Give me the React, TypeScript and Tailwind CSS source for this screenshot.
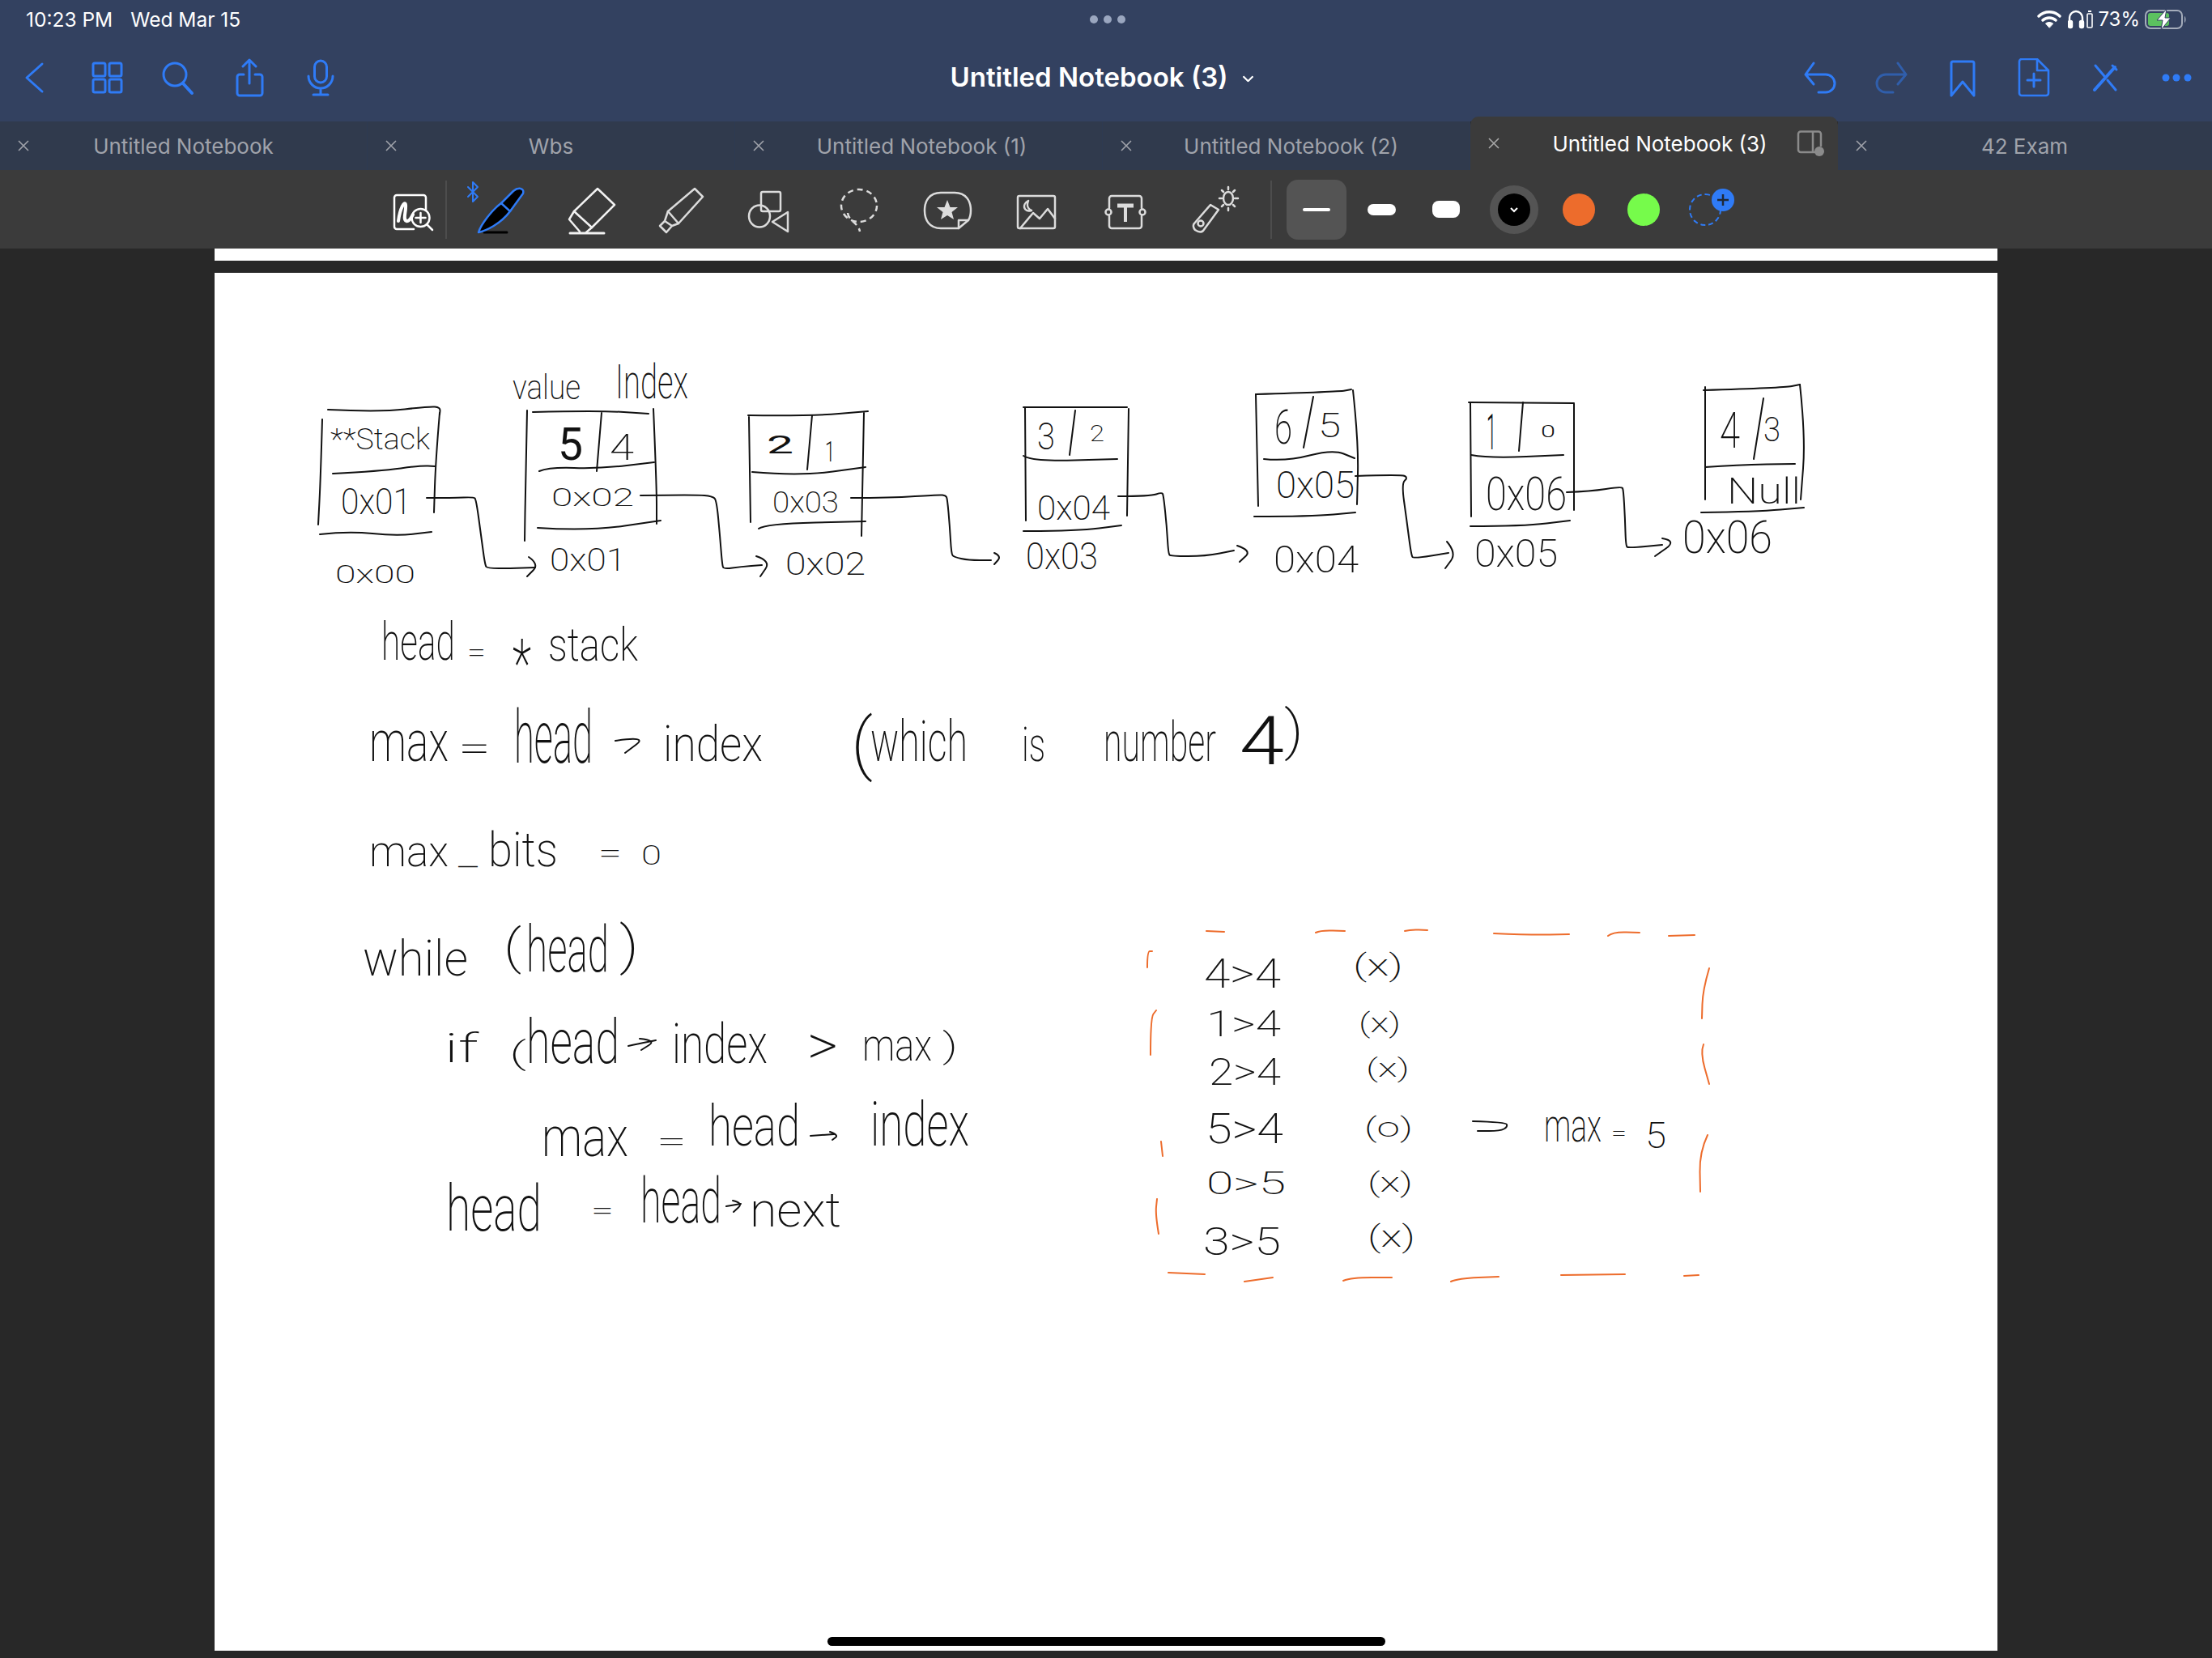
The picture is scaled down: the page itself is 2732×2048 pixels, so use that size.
import { ReactNode } from 'react';

type Pt = [number, number];

// quadratic smoothing through midpoints, gives the strokes a hand drawn feel
const smooth = (pts: Pt[]) => {
  let d = `M${pts[0][0]} ${pts[0][1]}`;
  for (let i = 1; i < pts.length - 1; i++) {
    const mx = (pts[i][0] + pts[i + 1][0]) / 2;
    const my = (pts[i][1] + pts[i + 1][1]) / 2;
    d += ` Q${pts[i][0]} ${pts[i][1]} ${mx} ${my}`;
  }
  const last = pts[pts.length - 1];
  return `${d} L${last[0]} ${last[1]}`;
};

const inkStrokes: Pt[][] = [
  // box 0 **stack
  [[405, 506], [470, 509], [530, 502], [544, 503], [543, 512]],
  [[398, 518], [396, 590], [393, 648]],
  [[543, 510], [538, 570], [536, 633]],
  [[411, 585], [470, 582], [520, 575], [537, 576]],
  [[395, 660], [430, 656], [490, 662], [533, 657]],
  [[527, 615], [560, 615], [585, 614], [588, 617], [594, 660], [599, 698], [602, 702], [630, 702], [661, 701]],
  [[653, 688], [666, 697], [651, 712]],
  // box 1
  [[658, 509], [740, 507], [801, 511]],
  [[651, 507], [649, 600], [648, 668]],
  [[807, 505], [811, 600], [811, 647]],
  [[743, 510], [737, 582]],
  [[666, 582], [678, 577], [740, 579], [808, 571]],
  [[664, 652], [727, 656], [816, 643]],
  [[791, 612], [860, 611], [880, 613], [885, 618], [889, 660], [892, 698], [894, 703], [915, 700], [941, 698]],
  [[934, 687], [952, 693], [939, 712]],
  // box 2
  [[924, 513], [1000, 514], [1072, 508]],
  [[925, 515], [927, 645]],
  [[1067, 510], [1064, 662]],
  [[1003, 513], [997, 580]],
  [[929, 583], [988, 588], [1069, 577]],
  [[937, 653], [945, 647], [1069, 644]],
  [[1051, 615], [1100, 615], [1160, 611], [1168, 612], [1170, 616], [1173, 650], [1175, 684], [1178, 688], [1196, 692], [1224, 692]],
  [[1228, 683], [1237, 687], [1228, 697]],
  // box 3
  [[1264, 503], [1392, 503]],
  [[1266, 503], [1267, 643]],
  [[1394, 505], [1392, 637]],
  [[1328, 507], [1321, 562]],
  [[1264, 563], [1274, 570], [1380, 567]],
  [[1264, 656], [1330, 656], [1385, 649]],
  [[1381, 613], [1421, 613], [1435, 608], [1437, 612], [1441, 650], [1443, 684], [1446, 687], [1489, 687], [1524, 680]],
  [[1528, 674], [1546, 680], [1531, 694]],
  // box 4
  [[1551, 487], [1653, 484], [1669, 481]],
  [[1551, 487], [1554, 625]],
  [[1671, 482], [1678, 547], [1676, 623]],
  [[1622, 490], [1610, 553]],
  [[1561, 567], [1589, 570], [1646, 555], [1673, 566]],
  [[1549, 638], [1620, 638], [1674, 633]],
  [[1674, 588], [1731, 586], [1739, 590], [1731, 597], [1737, 640], [1743, 686], [1746, 690], [1789, 683]],
  [[1787, 669], [1799, 683], [1785, 702]],
  // box 5
  [[1814, 497], [1944, 498]],
  [[1816, 498], [1817, 638]],
  [[1944, 499], [1944, 630]],
  [[1881, 497], [1876, 557]],
  [[1817, 562], [1839, 566], [1931, 562]],
  [[1816, 650], [1881, 650], [1939, 643]],
  [[1935, 608], [1964, 607], [2003, 601], [2005, 605], [2007, 640], [2008, 674], [2011, 677], [2053, 673]],
  [[2053, 665], [2071, 668], [2044, 687]],
  // box 6
  [[2104, 482], [2203, 479], [2223, 475]],
  [[2106, 478], [2106, 617]],
  [[2223, 475], [2230, 540], [2224, 617]],
  [[2178, 492], [2166, 567]],
  [[2106, 577], [2146, 574], [2217, 573]],
  [[2101, 633], [2170, 632], [2228, 627]],
  // arrows in the notes
  [[760, 915], [800, 909], [772, 930]],
  [[776, 1292], [790, 1289], [810, 1285]],
  [[790, 1283], [811, 1285], [792, 1297]],
  [[1001, 1403], [1030, 1401]],
  [[1025, 1398], [1036, 1402], [1028, 1408]],
  [[897, 1490], [915, 1487]],
  [[905, 1483], [918, 1486], [906, 1497]],
  // => in the table
  [[1819, 1385], [1860, 1386], [1862, 1392], [1853, 1397], [1825, 1397]],
];

const orangeStrokes: Pt[][] = [
  [[1490, 1150], [1512, 1151]],
  [[1625, 1152], [1631, 1149], [1661, 1150]],
  [[1735, 1150], [1742, 1148], [1763, 1149]],
  [[1845, 1153], [1890, 1155], [1938, 1154]],
  [[1986, 1156], [1992, 1151], [2025, 1152]],
  [[2061, 1156], [2093, 1155]],
  [[1417, 1195], [1417, 1175], [1423, 1175]],
  [[1421, 1303], [1421, 1257], [1428, 1248]],
  [[1436, 1428], [1434, 1410]],
  [[1431, 1524], [1427, 1500], [1429, 1481]],
  [[1443, 1572], [1488, 1574]],
  [[1537, 1583], [1572, 1578]],
  [[1659, 1582], [1669, 1578], [1719, 1578]],
  [[1792, 1583], [1801, 1579], [1851, 1577]],
  [[1928, 1575], [2007, 1574]],
  [[2080, 1576], [2098, 1575]],
  [[2111, 1196], [2103, 1223], [2102, 1258]],
  [[2104, 1290], [2100, 1300], [2111, 1339]],
  [[2109, 1402], [2099, 1423], [2100, 1472]],
];

// text, x, baseline, width, font size, weight
type Note = [string, number, number, number, number, number?];

const notes: Note[] = [
  ['value', 633, 493, 84, 42],
  ['Index', 760, 492, 90, 60],
  ['**Stack', 408, 555, 123, 36],
  ['0x01', 421, 635, 87, 44],
  ['0x01', 679, 705, 94, 38],
  ['0x00', 414, 720, 99, 32],
  ['5', 689, 568, 31, 56, 400],
  ['4', 753, 568, 30, 44],
  ['0x02', 681, 625, 102, 31],
  ['0x02', 970, 710, 99, 38],
  ['2', 947, 560, 33, 32, 400],
  ['1', 1019, 570, 12, 35, 300],
  ['0x03', 954, 633, 82, 36],
  ['0x03', 1267, 703, 89, 46],
  ['3', 1281, 555, 22, 46],
  ['2', 1346, 545, 18, 28],
  ['0x04', 1281, 642, 90, 42],
  ['0x04', 1573, 707, 105, 47],
  ['6', 1574, 548, 22, 60],
  ['5', 1628, 540, 28, 42],
  ['0x05', 1576, 615, 97, 46],
  ['0x05', 1821, 700, 103, 48],
  ['1', 1836, 555, 12, 62, 300],
  ['0', 1903, 540, 18, 21, 300],
  ['0x06', 1835, 630, 100, 58],
  ['0x06', 2078, 683, 111, 56],
  ['4', 2124, 553, 25, 62],
  ['3', 2178, 545, 21, 42],
  ['Null', 2133, 622, 91, 44],
  // head = *stack
  ['head', 471, 815, 91, 65],
  ['=', 577, 818, 23, 36],
  ['*', 633, 848, 23, 84],
  ['stack', 677, 816, 111, 58],
  // max = head -> index
  ['max', 456, 940, 98, 70],
  ['=', 566, 939, 40, 44],
  ['head', 635, 942, 97, 90],
  ['index', 819, 940, 123, 62],
  ['(', 1051, 947, 27, 84],
  ['which', 1075, 940, 120, 70],
  ['is', 1262, 940, 29, 60],
  ['number', 1363, 940, 139, 68],
  ['4', 1531, 944, 55, 84, 300],
  [')', 1586, 925, 24, 66],
  // max_bits = 0
  ['max', 456, 1070, 98, 53],
  ['_', 566, 1070, 24, 40],
  ['bits', 603, 1070, 86, 60],
  ['=', 739, 1065, 29, 34],
  ['0', 792, 1068, 25, 34],
  // while loop
  ['while', 448, 1205, 130, 62],
  ['(', 622, 1190, 22, 60],
  ['head', 650, 1200, 102, 80],
  [')', 765, 1190, 24, 64],
  ['if', 549, 1312, 42, 50],
  ['(', 629, 1314, 21, 38],
  ['head', 650, 1313, 115, 76],
  ['index', 830, 1313, 118, 68],
  ['>', 997, 1315, 38, 70],
  ['max', 1065, 1310, 86, 56],
  [')', 1164, 1306, 19, 42],
  ['max', 669, 1428, 107, 68],
  ['=', 811, 1422, 37, 36],
  ['head', 875, 1415, 113, 70],
  ['index', 1075, 1415, 122, 76],
  ['head', 551, 1520, 118, 80],
  ['=', 730, 1505, 28, 30],
  ['head', 791, 1510, 100, 78],
  ['next', 926, 1515, 113, 60],
  // comparison table
  ['4>4', 1487, 1220, 95, 50],
  ['(x)', 1671, 1205, 62, 36],
  ['1>4', 1490, 1280, 92, 44],
  ['(x)', 1678, 1275, 52, 34],
  ['2>4', 1493, 1340, 89, 46],
  ['(x)', 1687, 1330, 54, 32],
  ['5>4', 1489, 1412, 96, 52],
  ['(o)', 1685, 1404, 60, 34],
  ['max', 1907, 1410, 71, 58],
  ['=', 1990, 1408, 19, 26],
  ['5', 2032, 1418, 26, 44],
  ['0>5', 1490, 1475, 98, 38],
  ['(x)', 1689, 1472, 56, 34],
  ['3>5', 1486, 1550, 96, 48],
  ['(x)', 1689, 1540, 59, 36],
];

function NavIcon({ children, dim }: { children: ReactNode; dim?: boolean }) {
  return (
    <div className="flex w-[88px] justify-center">
      <svg
        width="44"
        height="48"
        viewBox="0 0 44 48"
        fill="none"
        stroke="#2f7bf6"
        strokeWidth="3"
        strokeLinecap="round"
        strokeLinejoin="round"
        className={dim ? 'opacity-50' : ''}
      >
        {children}
      </svg>
    </div>
  );
}

function ToolIcon({ children }: { children: ReactNode }) {
  return (
    <div className="flex w-[110px] justify-center">
      <svg
        width="64"
        height="64"
        viewBox="0 0 64 64"
        fill="none"
        stroke="#dcdcdc"
        strokeWidth="2.5"
        strokeLinecap="round"
        strokeLinejoin="round"
        className="overflow-visible"
      >
        {children}
      </svg>
    </div>
  );
}

function CloseMark({ color }: { color: string }) {
  return (
    <svg width="14" height="14" viewBox="0 0 14 14" stroke={color} strokeWidth="1.6" className="absolute left-[22px] top-1/2 -translate-y-1/2">
      <path d="M1 1 L13 13 M13 1 L1 13" />
    </svg>
  );
}

function Tab({ label, className }: { label: string; className: string }) {
  return (
    <div className={`relative flex h-[60px] items-center justify-center border-r border-[#2d3a52] bg-[#303a4d] text-[26px] text-[#a0a3ab] ${className}`}>
      <CloseMark color="#a0a3ab" />
      {label}
    </div>
  );
}

function ActiveTab() {
  return (
    <div className="relative -mt-[6px] flex h-[66px] w-[454px] shrink-0 items-center justify-center rounded-t-[10px] bg-[#3b3b3b] pl-[14px] text-[26px] text-white">
      <CloseMark color="#a9a9a9" />
      Untitled Notebook (3)
      <svg width="36" height="34" viewBox="0 0 36 34" fill="none" stroke="#8b8b8b" strokeWidth="2.5" className="absolute right-[16px] top-[17px]">
        <path d="M6 1.5 H28 a3 3 0 0 1 3 3 V20 M25 27 H6 a3 3 0 0 1 -3 -3 V4.5 a3 3 0 0 1 3 -3 M21 2 V27" />
        <circle cx="29" cy="26" r="6" fill="#8b8b8b" stroke="none" />
      </svg>
    </div>
  );
}

export default function App() {
  return (
    <div className="flex h-[2048px] w-[2732px] flex-col overflow-hidden bg-[#282828] font-['Inter',sans-serif]">
      <header className="h-[150px] bg-[#334160] text-white">
        <div className="relative flex h-[48px] items-center pl-[32px] pr-[31px] text-[24.5px]">
          <span>10:23 PM</span>
          <span className="ml-[22px]">Wed Mar 15</span>
          <div className="absolute left-[1346px] top-[19px] flex gap-[7px]">
            <span className="size-[10px] rounded-full bg-[#9aa6bf]" />
            <span className="size-[10px] rounded-full bg-[#9aa6bf]" />
            <span className="size-[10px] rounded-full bg-[#9aa6bf]" />
          </div>
          <div className="ml-auto flex items-center">
            <svg width="30" height="24" viewBox="0 0 30 24" fill="none" stroke="white" strokeWidth="3.4" strokeLinecap="round">
              <path d="M2 8 C9 1 21 1 28 8 M7 13 C11 9 19 9 23 13" />
              <path d="M15 22 L10.5 17 C13 15 17 15 19.5 17 Z" fill="white" strokeWidth="1" />
            </svg>
            <svg width="32" height="24" viewBox="0 0 32 24" fill="none" stroke="white" strokeWidth="2.4" className="ml-[8px]">
              <path d="M2 20 V11 C2 -1 18 -1 18 11 V20" />
              <rect x="1" y="14" width="4" height="8" rx="1.5" fill="white" />
              <rect x="15" y="14" width="4" height="8" rx="1.5" fill="white" />
              <rect x="24" y="5" width="6" height="17" rx="1" strokeWidth="1.6" />
              <rect x="25" y="1" width="4" height="2" fill="white" stroke="none" />
            </svg>
            <span className="ml-[5px] text-[24px]">73%</span>
            <svg width="52" height="26" viewBox="0 0 52 26" fill="none" className="ml-[6px]">
              <rect x="1" y="2" width="45" height="22" rx="6" stroke="#a4acba" strokeWidth="2" />
              <rect x="4" y="5" width="26" height="16" rx="3" fill="#5cc15f" />
              <path d="M49 9 V17 C51 16 51 10 49 9 Z" fill="#a4acba" />
              <path d="M27 0 L15 14 H22 L20 26 L32 11 H25 Z" fill="white" stroke="#334160" strokeWidth="1" />
            </svg>
          </div>
        </div>
        <div className="relative flex h-[96px] items-center justify-between">
          <div className="flex">
            <NavIcon>
              <path d="M30 7 L11 24 L30 41" />
            </NavIcon>
            <NavIcon>
              <rect x="5" y="6" width="15" height="16" rx="2" />
              <rect x="25" y="6" width="15" height="16" rx="2" />
              <rect x="5" y="26" width="15" height="16" rx="2" />
              <rect x="25" y="26" width="15" height="16" rx="2" />
            </NavIcon>
            <NavIcon>
              <circle cx="18" cy="20" r="14" />
              <path d="M28 31 L39 43" strokeWidth="4" />
            </NavIcon>
            <NavIcon>
              <path d="M15 20 H10 a3 3 0 0 0 -3 3 V43 a3 3 0 0 0 3 3 H35 a3 3 0 0 0 3 -3 V23 a3 3 0 0 0 -3 -3 H29" />
              <path d="M22 31 V2 M14 10 L22 2 L30 10" />
            </NavIcon>
            <NavIcon>
              <rect x="14.5" y="3" width="15" height="27" rx="7.5" />
              <path d="M7 22 a15 15 0 0 0 30 0 M22 37 V44 M13 45 H31" />
            </NavIcon>
          </div>
          <div className="absolute left-[1361px] top-[48px] flex -translate-x-1/2 -translate-y-1/2 items-center text-[33px] font-semibold">
            Untitled Notebook (3)
            <svg width="14" height="8" viewBox="0 0 14 8" fill="none" stroke="white" strokeWidth="2.2" className="ml-[18px] mt-[3px]">
              <path d="M1 1 L7 7 L13 1" />
            </svg>
          </div>
          <div className="flex">
            <NavIcon>
              <path d="M14 6 L4 20 L14 32 M4 20 H29 a11 11 0 0 1 0 22 H20" />
            </NavIcon>
            <NavIcon dim>
              <path d="M30 6 L40 20 L30 32 M40 20 H15 a11 11 0 0 0 0 22 H24" />
            </NavIcon>
            <NavIcon>
              <path d="M8 6 a2 2 0 0 1 2 -2 H34 a2 2 0 0 1 2 2 V46 L22 29 L8 46 Z" />
            </NavIcon>
            <NavIcon>
              <path d="M26 1 H7 a3 3 0 0 0 -3 3 V43 a3 3 0 0 0 3 3 H37 a3 3 0 0 0 3 -3 V15 Z M26 1 V15 H40" strokeWidth="2.6" />
              <path d="M22 19 V35 M14 27 H30" />
            </NavIcon>
            <NavIcon>
              <path d="M10 9 L21 22 M25 27 L35 39" />
              <path d="M34 11 L9 39" strokeWidth="4" />
              <path d="M31 9 L36 14" strokeWidth="3" />
            </NavIcon>
            <NavIcon>
              <circle cx="9" cy="24" r="4.5" fill="#2f7bf6" stroke="none" />
              <circle cx="22" cy="24" r="4.5" fill="#2f7bf6" stroke="none" />
              <circle cx="36" cy="24" r="4.5" fill="#2f7bf6" stroke="none" />
            </NavIcon>
          </div>
        </div>
      </header>

      <div className="flex h-[60px]">
        <Tab label="Untitled Notebook" className="w-[454px] shrink-0" />
        <Tab label="Wbs" className="w-[454px] shrink-0" />
        <Tab label="Untitled Notebook (1)" className="w-[454px] shrink-0 pl-[8px]" />
        <Tab label="Untitled Notebook (2)" className="w-[454px] shrink-0 pl-[12px]" />
        <ActiveTab />
        <Tab label="42 Exam" className="flex-1" />
      </div>

      <div className="flex h-[97px] items-center bg-[#3b3b3b] pl-[470px]">
        <svg width="80" height="64" viewBox="0 0 80 64" fill="none" stroke="white" strokeWidth="2.5" strokeLinecap="round" strokeLinejoin="round">
          <path d="M41 56 H20 a3 3 0 0 1 -3 -3 V17 a3 3 0 0 1 3 -3 H53 a3 3 0 0 1 3 3 V32" />
          <path d="M22 46 C24 30 30 20 31 26 C32 34 27 44 32 46 C35 47 38 42 40 38" strokeWidth="4" />
          <circle cx="49.5" cy="42" r="11" />
          <path d="M57 50 L64 57 M49.5 36 V48 M43.5 42 H55.5" />
        </svg>
        <div className="h-[72px] w-[2px] bg-[#4d4d4d]" />
        <div className="ml-[13px] flex">
          <ToolIcon>
            <path d="M-10 4 L2 16 L-4 22 V-2 L2 4 L-10 16" stroke="#2f7bf6" strokeWidth="2" />
            <path d="M10 60 H38" stroke="#000" strokeWidth="3" />
            <path d="M3 60 C6 50 20 32 31 24 L46 9 C52 4 60 5 58 12 L42 34 C30 50 12 58 3 60 Z" fill="#000" stroke="#2f7bf6" strokeWidth="2.5" />
            <path d="M31 24 L42 34" stroke="#2f7bf6" />
          </ToolIcon>
          <ToolIcon>
            <path d="M40 6 L61 26 L33 54 L11 34 Z" stroke="#f2f2f2" />
            <path d="M11 34 L5 44 L18 59 M33 54 L26 60" stroke="#f2f2f2" />
            <path d="M6 61 H48" stroke="#f2f2f2" strokeWidth="3" />
          </ToolIcon>
          <ToolIcon>
            <path d="M50 6 L60 16 L30 49 L17 34 Z" />
            <path d="M17 34 L13 46 L7 52 L15 60 L22 52 L30 49 M13 46 L22 52" />
          </ToolIcon>
          <ToolIcon>
            <rect x="22" y="10" width="24" height="24" rx="2" />
            <ellipse cx="20" cy="40" rx="13" ry="13.5" />
            <path d="M55 35 L36 47 L55 59 Z" />
          </ToolIcon>
          <ToolIcon>
            <ellipse cx="33" cy="27" rx="22" ry="20" strokeDasharray="7 5" strokeLinecap="butt" />
            <path d="M19 36 C20 46 32 48 34 59" strokeDasharray="7 5" strokeLinecap="butt" />
          </ToolIcon>
          <ToolIcon>
            <path d="M46 55 H24 C10 55 4 45 4 33 C4 21 10 11 24 11 H41 C55 11 61 21 61 33 C61 38 60 42 58 45 Z" />
            <path d="M46 55 V45 H58" />
            <path d="M32 20 L35.5 29 L45 29 L37.5 35 L40 44 L32 39 L24 44 L26.5 35 L19 29 L28.5 29 Z" fill="#dcdcdc" stroke="none" />
          </ToolIcon>
          <ToolIcon>
            <rect x="9" y="15" width="46" height="40" rx="2" />
            <path d="M22 21 C14 25 16 36 26 33 C21 31 20 26 22 21 Z" />
            <path d="M12 55 L28 36 L36 43 L46 31 L55 43" />
          </ToolIcon>
          <ToolIcon>
            <path d="M12 30 V18 a3 3 0 0 1 3 -3 H49 a3 3 0 0 1 3 3 V30 M12 40 V52 a3 3 0 0 0 3 3 H49 a3 3 0 0 0 3 -3 V40" />
            <circle cx="11" cy="35" r="3.5" />
            <circle cx="53" cy="35" r="3.5" />
            <path d="M22 27 H42" strokeWidth="5" strokeLinecap="butt" />
            <path d="M32 27 V47" strokeWidth="4" strokeLinecap="butt" />
          </ToolIcon>
          <ToolIcon>
            <path d="M25 27 L35 33 L16 59 C13 62 9 60 6 58 C4 56 3 52 5 50 Z" transform="translate(2 -1)" />
            <circle cx="15" cy="49" r="3.5" />
            <ellipse cx="49" cy="18" rx="6" ry="8" />
            <path d="M49 4 V7 M49 30 V33 M38 18 H41 M57 18 H61 M41 8 L43 10 M57 8 L55 10 M41 28 L43 26 M57 28 L55 26" />
          </ToolIcon>
        </div>
        <div className="ml-[14px] h-[72px] w-[2px] bg-[#4d4d4d]" />
        <div className="ml-[18px] flex h-[74px] w-[74px] items-center justify-center rounded-[14px] bg-[#545454]">
          <div className="h-[4px] w-[34px] rounded-full bg-white" />
        </div>
        <div className="ml-[26px] h-[14px] w-[35px] rounded-[7px] bg-white" />
        <div className="ml-[45px] h-[21px] w-[34px] rounded-[8px] bg-white" />
        <div className="ml-[37px] flex size-[60px] items-center justify-center rounded-full bg-[#545454]">
          <div className="flex size-[40px] items-center justify-center rounded-full bg-black">
            <svg width="12" height="8" viewBox="0 0 12 8" fill="none" stroke="white" strokeWidth="2">
              <path d="M2 2 L6 6 L10 2" />
            </svg>
          </div>
        </div>
        <div className="ml-[30px] size-[40px] rounded-full bg-[#ed6c2c]" />
        <div className="ml-[40px] size-[40px] rounded-full bg-[#76fb4b]" />
        <div className="relative ml-[36px] size-[40px] rounded-full border-2 border-dashed border-[#2f7bf6]">
          <div className="absolute -right-[18px] -top-[8px] flex size-[28px] items-center justify-center rounded-full bg-[#2f7bf6]">
            <svg width="16" height="16" viewBox="0 0 16 16" stroke="#1f2937" strokeWidth="2.5">
              <path d="M8 1 V15 M1 8 H15" />
            </svg>
          </div>
        </div>
      </div>

      <main className="relative flex flex-1 flex-col items-center pb-[9px]">
        <div className="h-[15px] w-[2202px] bg-white" />
        <div className="relative mt-[15px] w-[2202px] flex-1 bg-white">
          <svg
            viewBox="265 337 2202 1702"
            className="absolute inset-0 h-full w-full font-['Roboto',sans-serif]"
            fill="none"
            strokeLinecap="round"
            strokeLinejoin="round"
          >
            {inkStrokes.map((pts, i) => (
              <path key={i} d={smooth(pts)} stroke="#111" strokeWidth="2" />
            ))}
            {orangeStrokes.map((pts, i) => (
              <path key={i} d={smooth(pts)} stroke="#ed6c2c" strokeWidth="2" />
            ))}
            {notes.map(([t, x, y, w, size, weight], i) => (
              <text
                key={i}
                x={x}
                y={y}
                fontSize={size}
                fontWeight={weight ?? 200}
                fill="#111"
                textLength={w}
                lengthAdjust="spacingAndGlyphs"
              >
                {t}
              </text>
            ))}
          </svg>
        </div>
        <div className="absolute bottom-[15px] left-[1022px] h-[11px] w-[689px] rounded-full bg-black" />
      </main>
    </div>
  );
}
